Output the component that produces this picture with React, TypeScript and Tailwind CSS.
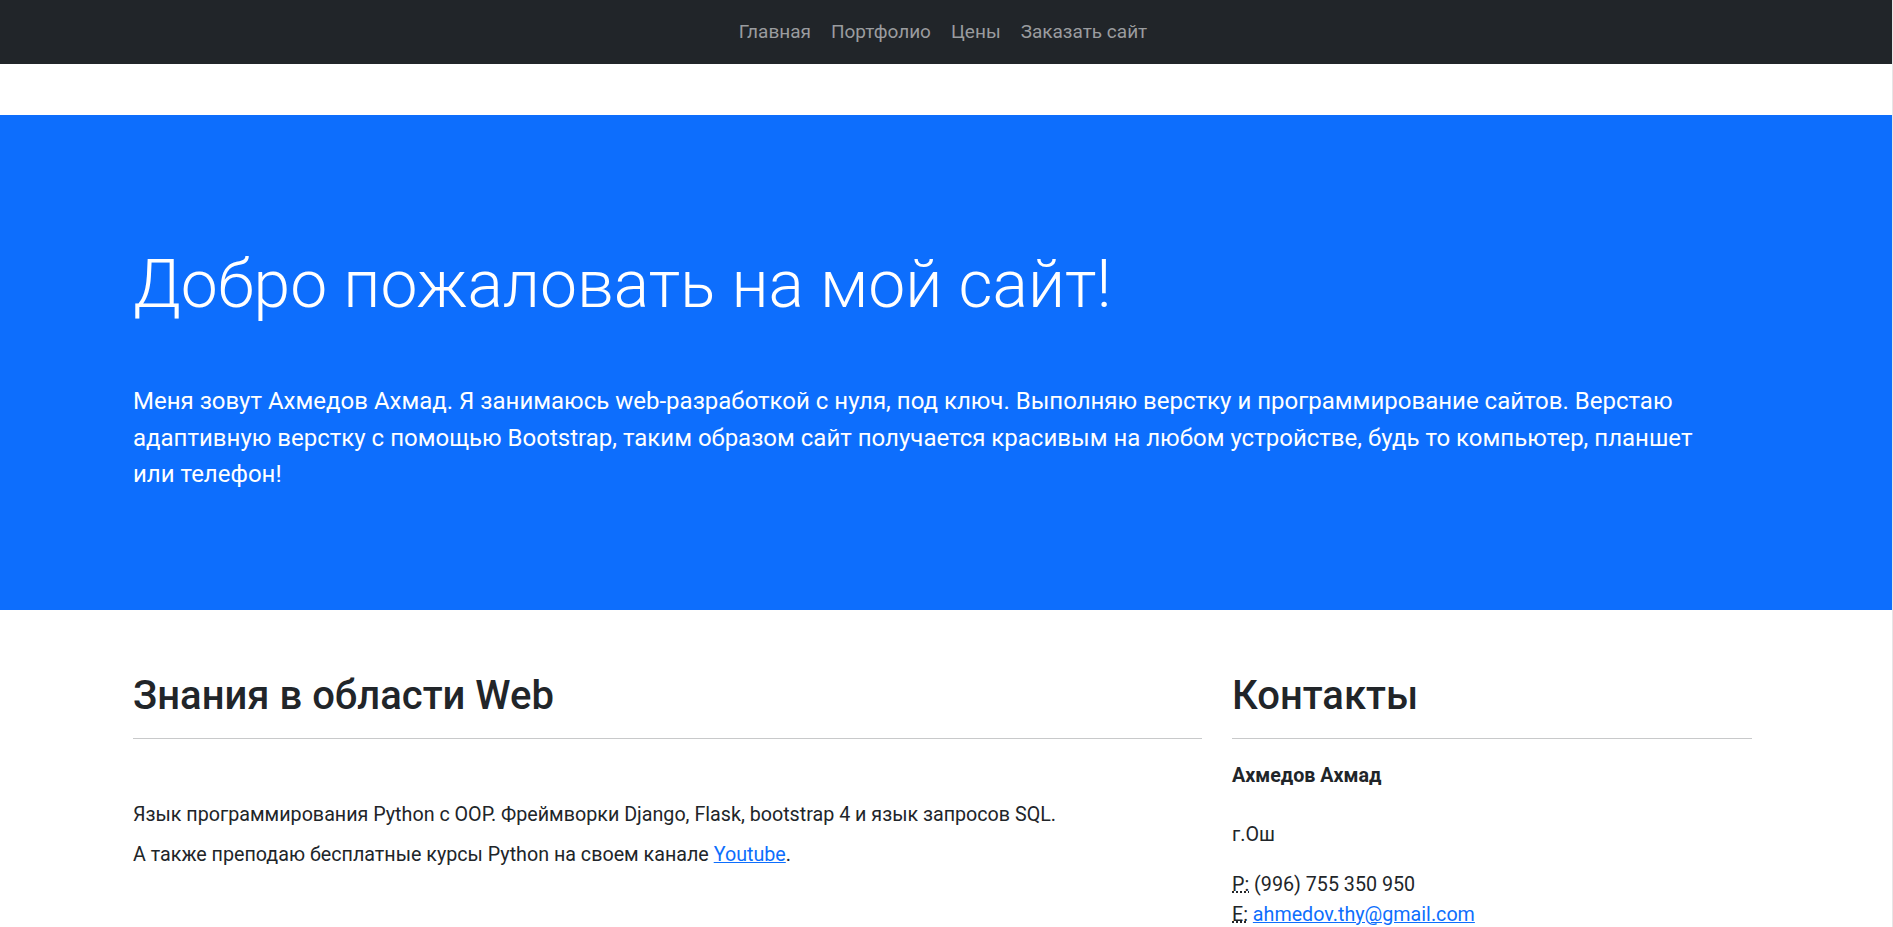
const navLinks = ["Главная", "Портфолио", "Цены", "Заказать сайт"];

const App = () => {
  return (
    <div
      className="min-h-screen bg-white text-[#212529] border-r border-[#e6e6e6]"
      style={{ fontFamily: "Roboto, 'Noto Sans', sans-serif" }}
    >
      <nav className="h-[64px] bg-[#212529] flex items-center justify-center pr-[6px]">
        <ul className="flex items-center">
          {navLinks.map((link) => (
            <li key={link}>
              <a href="#" className="block px-[10px] text-[19px] leading-[30px] text-[#9a9c9f]">
                {link}
              </a>
            </li>
          ))}
        </ul>
      </nav>

      <section className="mt-[51px] bg-[#0d6efd] text-white pt-[130px] pb-[117px]">
        <div className="w-[1619px] ml-[133px]">
          <h1 className="text-[66px] leading-[79px] font-light">Добро пожаловать на мой сайт!</h1>
          <p className="mt-[59px] max-w-[1595px] text-[24px] leading-[36.5px]">
            Меня зовут Ахмедов Ахмад. Я занимаюсь web-разработкой с нуля, под ключ. Выполняю верстку и
            программирование сайтов. Верстаю адаптивную верстку с помощью Bootstrap, таким образом сайт
            получается красивым на любом устройстве, будь то компьютер, планшет или телефон!
          </p>
        </div>
      </section>

      <main className="w-[1619px] ml-[133px] pt-[62px] flex gap-[30px]">
        <div className="w-[1069px]">
          <h2 className="text-[40px] leading-[48px] font-medium">Знания в области Web</h2>
          <hr className="mt-[18px] border-0 h-px bg-[#c8c9ca]" />
          <p className="mt-[61px] text-[19.7px] leading-[30px]">
            Язык программирования Python с OOP. Фреймворки Django, Flask, bootstrap 4 и язык запросов SQL.
          </p>
          <p className="mt-[10px] text-[19.7px] leading-[30px]">
            А также преподаю бесплатные курсы Python на своем канале{" "}
            <a href="#" className="text-[#0d6efd] underline">
              Youtube
            </a>
            .
          </p>
        </div>

        <div className="w-[520px]">
          <h2 className="text-[40px] leading-[48px] font-medium">Контакты</h2>
          <hr className="mt-[18px] border-0 h-px bg-[#c8c9ca]" />
          <address className="not-italic text-[19.7px] leading-[30px]">
            <p className="mt-[22px] font-bold">Ахмедов Ахмад</p>
            <p className="mt-[29px]">г.Ош</p>
            <p className="mt-[20px]">
              <abbr title="Phone" className="underline decoration-dotted">
                P:
              </abbr>{" "}
              (996) 755 350 950
              <br />
              <abbr title="Email" className="underline decoration-dotted">
                E:
              </abbr>{" "}
              <a href="#" className="text-[#0d6efd] underline">
                ahmedov.thy@gmail.com
              </a>
            </p>
          </address>
        </div>
      </main>
    </div>
  );
};

export default App;
